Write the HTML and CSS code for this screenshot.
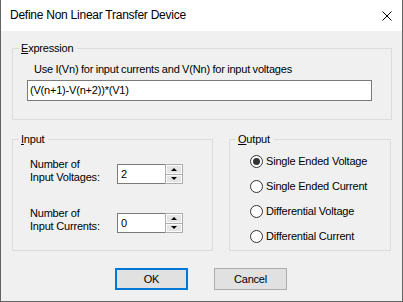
FILE: index.html
```
<!DOCTYPE html>
<html>
    <head>
        <title>Define Non Linear Transfer Device</title>
        <link rel="stylesheet" href="styles.css">
    </head>
    <body>
        <div class="window">
            <div class="titlebar">
                <span class="title">Define Non Linear Transfer Device</span>
                <span class="close">
                    <svg width="10" height="10" viewBox="0 0 10 10"><path d="M0.5 0.5 L9.5 9.5 M9.5 0.5 L0.5 9.5" stroke="#000" stroke-width="1" fill="none"/></svg>
                </span>
            </div>
            <div class="content">
                <div class="group expression">
                    <span class="group-label"><u>E</u>xpression</span>
                    <div class="hint">Use I(Vn) for input currents and V(Nn) for input voltages</div>
                    <div class="edit">(V(n+1)-V(n+2))*(V1)</div>
                </div>
                <div class="groups">
                    <div class="group input">
                        <span class="group-label"><u>I</u>nput</span>
                        <div class="field">
                            <div class="field-label">Number of<br>Input Voltages:</div>
                            <div class="spin">
                                <div class="spin-edit">2</div>
                                <div class="spin-buttons">
                                    <span class="spin-btn"><span class="arrow-up"></span></span>
                                    <span class="spin-btn"><span class="arrow-down"></span></span>
                                </div>
                            </div>
                        </div>
                        <div class="field second">
                            <div class="field-label">Number of<br>Input Currents:</div>
                            <div class="spin">
                                <div class="spin-edit">0</div>
                                <div class="spin-buttons">
                                    <span class="spin-btn"><span class="arrow-up"></span></span>
                                    <span class="spin-btn"><span class="arrow-down"></span></span>
                                </div>
                            </div>
                        </div>
                    </div>
                    <div class="group output">
                        <span class="group-label"><u>O</u>utput</span>
                        <div class="radio-row"><span class="radio checked"></span>Single Ended Voltage</div>
                        <div class="radio-row"><span class="radio"></span>Single Ended Current</div>
                        <div class="radio-row"><span class="radio"></span>Differential Voltage</div>
                        <div class="radio-row"><span class="radio"></span>Differential Current</div>
                    </div>
                </div>
                <div class="buttons">
                    <button class="btn default">OK</button>
                    <button class="btn">Cancel</button>
                </div>
            </div>
        </div>
    </body>
</html>
```

FILE: styles.css
```
body{
    margin: 0;
    font-family: 'Liberation Sans', Arial, sans-serif;
    font-size: 11px;
    line-height: 13px;
    letter-spacing: -0.2px;
    color: #000;
}
.window{
    width: 403px;
    height: 302px;
    box-sizing: border-box;
    border: 1px solid #646464;
    border-top: 0;
    background-color: #f0f0f0;
}
.titlebar{
    height: 31px;
    display: flex;
    align-items: center;
    justify-content: space-between;
    background-color: white;
    padding-left: 9px;
}
.title{
    font-size: 12px;
    letter-spacing: -0.25px;
}
.close{
    width: 30px;
    display: flex;
    justify-content: center;
}
.content{
    padding: 17px 11px 0 11px;
}
.group{
    position: relative;
    border: 1px solid #dcdcdc;
    box-sizing: border-box;
}
.group-label{
    position: absolute;
    top: -7px;
    left: 6px;
    padding: 0 4px 0 2px;
    background-color: #f0f0f0;
}
.expression{
    width: 380px;
    padding: 14px 0 18px 14px;
}
.hint{
    margin-left: 7px;
    word-spacing: -0.3px;
}
.edit{
    margin-top: 4px;
    width: 345px;
    height: 21px;
    box-sizing: border-box;
    border: 1px solid #7a7a7a;
    background-color: white;
    padding-left: 2px;
    line-height: 19px;
}
.groups{
    display: flex;
    gap: 16px;
    margin-top: 19px;
}
.input{
    width: 201px;
    height: 112px;
    padding: 18px 0 0 17px;
}
.output{
    width: 162px;
    height: 112px;
    padding: 15px 0 0 20px;
    display: flex;
    flex-direction: column;
    gap: 12px;
}
.field{
    display: flex;
    align-items: flex-end;
}
.field.second{
    margin-top: 23px;
}
.field-label{
    width: 87px;
}
.spin{
    display: flex;
    height: 20px;
}
.spin-edit{
    width: 48px;
    box-sizing: border-box;
    border: 1px solid #7a7a7a;
    border-right: 0;
    background-color: white;
    padding-left: 3px;
    line-height: 18px;
}
.spin-buttons{
    width: 18px;
    box-sizing: border-box;
    border: 1px solid #adadad;
    display: flex;
    flex-direction: column;
    gap: 1px;
    background-color: #adadad;
}
.spin-btn{
    flex: 1;
    background-color: #e5e5e5;
    border: 1px solid #fcfcfc;
    display: flex;
    align-items: center;
    justify-content: center;
}
.arrow-up{
    border-left: 3px solid transparent;
    border-right: 3px solid transparent;
    border-bottom: 3px solid #000;
}
.arrow-down{
    border-left: 3px solid transparent;
    border-right: 3px solid transparent;
    border-top: 3px solid #000;
}
.radio-row{
    display: flex;
    align-items: center;
    height: 13px;
}
.radio{
    width: 13px;
    height: 13px;
    box-sizing: border-box;
    border: 1px solid #333;
    border-radius: 50%;
    background-color: white;
    margin-right: 3px;
    display: flex;
    align-items: center;
    justify-content: center;
}
.radio.checked::after{
    content: "";
    width: 7px;
    height: 7px;
    border-radius: 50%;
    background-color: #333;
}
.buttons{
    display: flex;
    gap: 26px;
    margin-top: 17px;
    padding-left: 103px;
}
.btn{
    width: 73px;
    height: 22px;
    box-sizing: border-box;
    border: 1px solid #adadad;
    background-color: #e1e1e1;
    font-family: 'Liberation Sans', Arial, sans-serif;
    font-size: 11px;
    letter-spacing: -0.2px;
    padding: 0;
    color: #000;
}
.btn.default{
    border: 2px solid #0078d7;
}
```
